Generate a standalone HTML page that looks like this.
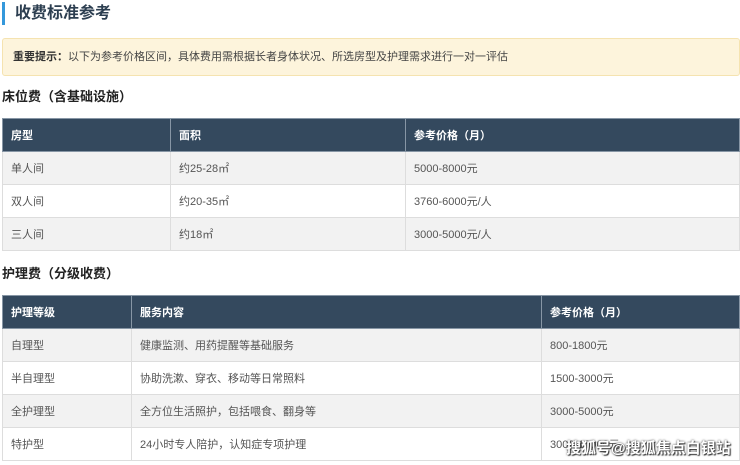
<!DOCTYPE html>
<html><head><meta charset="utf-8"><style>
*{margin:0;padding:0;box-sizing:border-box}
body{width:740px;height:465px;overflow:hidden;background:#fff;font-family:"Liberation Sans","Noto Sans CJK SC",sans-serif;color:#333;position:relative}
.title{position:absolute;left:2px;top:2px;height:23px;border-left:3px solid #3498db;padding-left:10px;font-size:16px;font-weight:bold;line-height:23px;color:#2c3e50}
.note{position:absolute;left:2px;top:38px;width:738px;height:38px;background:#fdf4dc;border:1px solid #f5e3b0;border-radius:3px;font-size:11px;line-height:36px;padding-left:10px;color:#444}
.note b{color:#333}
h3{position:absolute;left:2px;font-size:13px;font-weight:bold;color:#222}
table{position:absolute;left:2px;width:738px;border-collapse:collapse;font-size:11px}
td,th{border:1px solid #ddd;height:33px;padding-left:8px;text-align:left;color:#555;font-weight:normal}
th{background:#34495e;color:#fff;font-weight:bold;border-color:#8796a5}
tr:nth-child(even) td{background:#f2f2f2}
.wm{position:absolute;left:566px;top:437px;font-size:15px;color:#fff;font-weight:bold;text-shadow:0 0 2px #333,1px 1px 1px #333}
</style></head><body>
<div class="title">收费标准参考</div>
<div class="note"><b>重要提示：</b>以下为参考价格区间，具体费用需根据长者身体状况、所选房型及护理需求进行一对一评估</div>
<h3 style="top:86px">床位费（含基础设施）</h3>
<table style="top:118px">
<tr><th style="width:168px">房型</th><th style="width:235px">面积</th><th>参考价格（月）</th></tr>
<tr><td>单人间</td><td>约25-28㎡</td><td>5000-8000元</td></tr>
<tr><td>双人间</td><td>约20-35㎡</td><td>3760-6000元/人</td></tr>
<tr><td>三人间</td><td>约18㎡</td><td>3000-5000元/人</td></tr>
</table>
<h3 style="top:263px">护理费（分级收费）</h3>
<table style="top:295px">
<tr><th style="width:129px">护理等级</th><th style="width:410px">服务内容</th><th>参考价格（月）</th></tr>
<tr><td>自理型</td><td>健康监测、用药提醒等基础服务</td><td>800-1800元</td></tr>
<tr><td>半自理型</td><td>协助洗漱、穿衣、移动等日常照料</td><td>1500-3000元</td></tr>
<tr><td>全护理型</td><td>全方位生活照护，包括喂食、翻身等</td><td>3000-5000元</td></tr>
<tr><td>特护型</td><td>24小时专人陪护，认知症专项护理</td><td>3000-10000元</td></tr>
</table>
<div class="wm">搜狐号@搜狐焦点白银站</div>
</body></html>
